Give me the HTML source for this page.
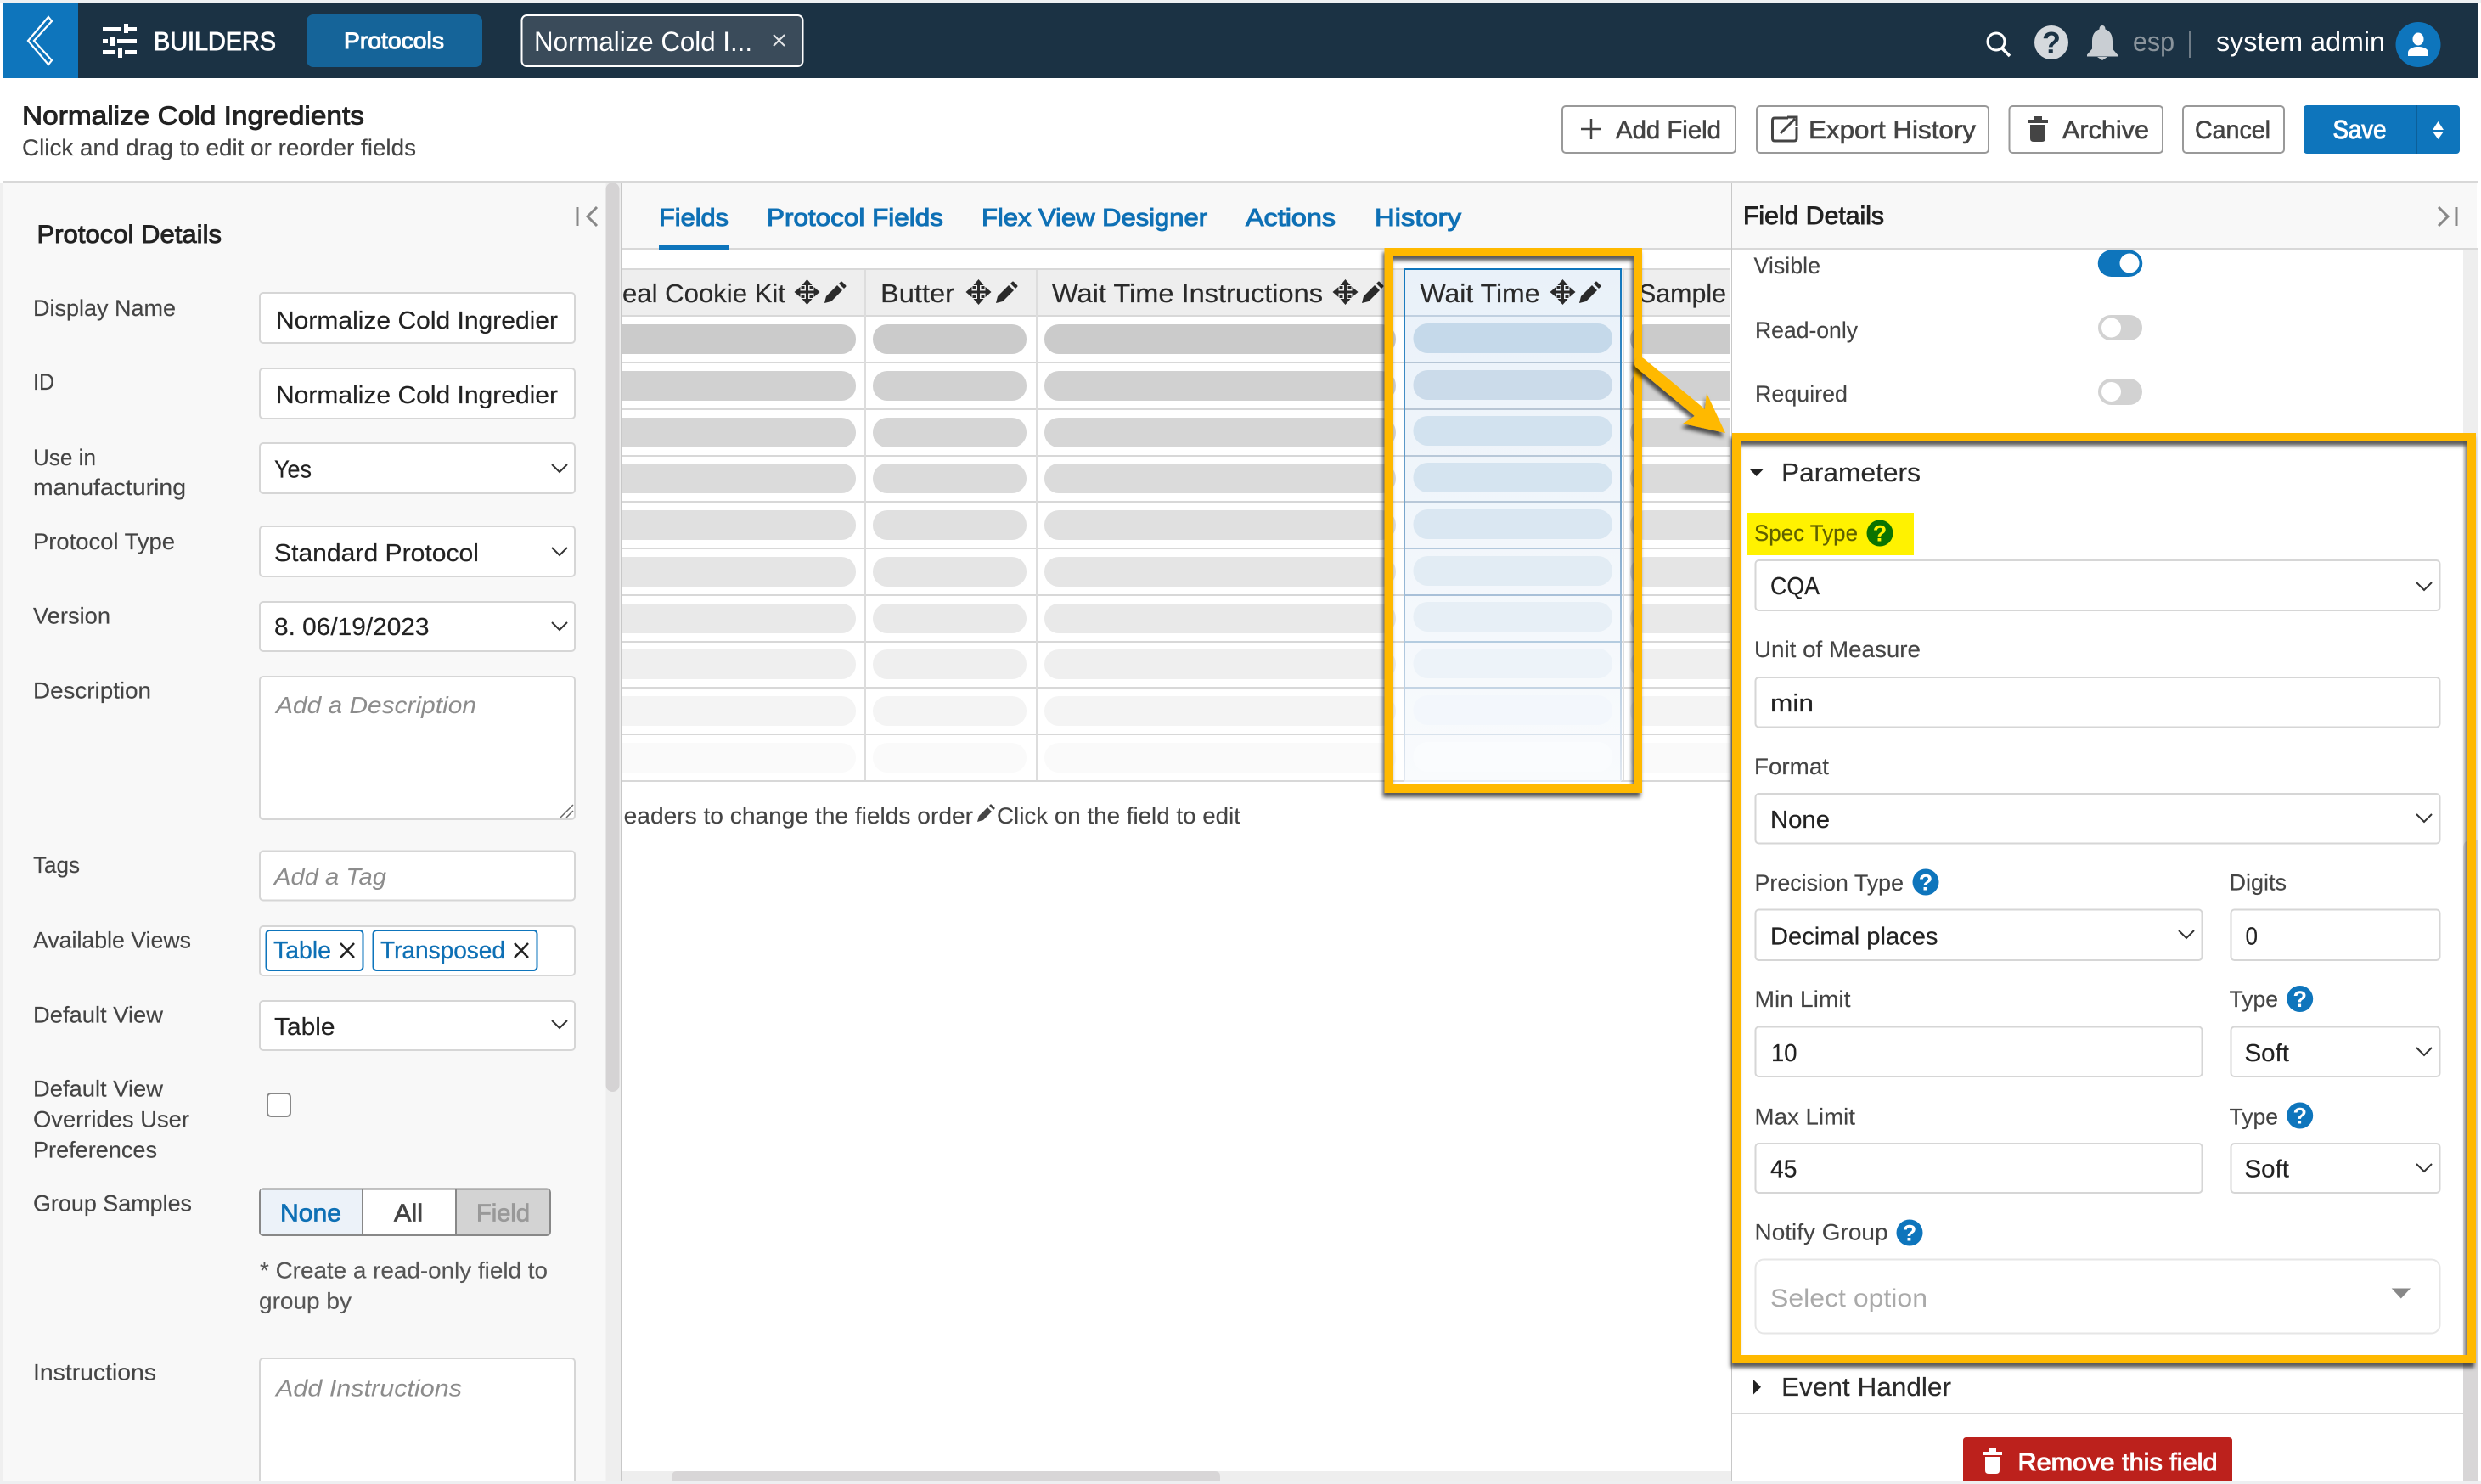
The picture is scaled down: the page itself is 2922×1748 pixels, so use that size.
<!DOCTYPE html>
<html lang="en"><head><meta charset="utf-8"><title>Normalize Cold Ingredients</title>
<style>
html,body{margin:0;padding:0;background:#fff;width:2922px;height:1748px;overflow:hidden}
svg{display:block}
text{font-family:"Liberation Sans",Arial,sans-serif;white-space:pre;transform:translateX(-1px)}
.l{font-size:27px;fill:#444;stroke:#444;stroke-width:.15}
.v{font-size:29px;fill:#222;stroke:#222;stroke-width:.2}
.ph{font-size:28px;fill:#8c8c8c;font-style:italic}
.h{font-size:30px;fill:#222;stroke:#222;stroke-width:.9}
.tb{font-size:29px;fill:#0e70b5;stroke:#0e70b5;stroke-width:1}
.th{font-size:31px;fill:#2a2a2a;stroke:#2a2a2a;stroke-width:.2}
.b{font-size:30px;fill:#444;stroke:#444;stroke-width:.6}
.w{fill:#fff;stroke:#fff;stroke-width:1}
.q{font-size:27px;font-weight:700;fill:#fff;text-anchor:middle}
.i{fill:#fff;stroke:#d6d6d6;stroke-width:2}
.bt{fill:#fff;stroke:#999;stroke-width:2}
.c{fill:none;stroke:#333;stroke-width:2}
.rl{fill:#d8d8d8}
</style></head><body>
<svg xmlns="http://www.w3.org/2000/svg" width="2922" height="1748" viewBox="0 0 2922 1748">
<defs>
<filter id="sh" x="-15%" y="-15%" width="130%" height="130%"><feDropShadow dx="-2" dy="5" stdDeviation="2.5" flood-color="#000" flood-opacity=".65"/></filter>
<clipPath id="cc"><rect x="732" y="294" width="1306" height="700"/></clipPath>
<linearGradient id="hb" x1="0" y1="0" x2="0" y2="1"><stop offset="0" stop-color="#e9f1f9"/><stop offset="1" stop-color="#f9fbfd"/></linearGradient>
<linearGradient id="hl" x1="0" y1="0" x2="0" y2="1"><stop offset="0" stop-color="#0e75bc"/><stop offset=".5" stop-color="#7fa8cc"/><stop offset="1" stop-color="#e2e8f0"/></linearGradient>
<path id="ch" class="c" d="M0,0 L9,9 L18,0"/>
<path id="mv" fill="#2a2a2a" d="M0,-15 L6,-8 H1.500 V-1.500 H8 V-6 L15,0 L8,6 V1.500 H1.500 V8 H6 L0,15 L-6,8 H-1.500 V1.500 H-8 V6 L-15,0 L-8,-6 V-1.500 H-1.500 V-8 H-6 Z M-7,-7 h4 v4 h-4 Z M3,-7 h4 v4 h-4 Z M-7,3 h4 v4 h-4 Z M3,3 h4 v4 h-4 Z"/>
<path id="pn" fill="#2a2a2a" d="M0,25 L2,17 L15,4 L21,10 L8,23 Z M17,2 L19,0 Q20,-1 21,0 L25,4 Q26,5 25,6 L23,8 Z"/>
<g id="p"><rect x="700" width="308" height="35" rx="17"/><rect x="1028" width="181" height="35" rx="17"/><rect x="1230" width="414" height="35" rx="17"/><rect x="1920" width="160" height="35" rx="17"/></g>
</defs>

<!-- page chrome -->
<rect width="2922" height="4" fill="#edf0f2"/>
<rect y="215" width="4" height="1533" fill="#efefef"/>

<!-- top bar -->
<rect x="4" y="4" width="2914" height="88" fill="#1b3244"/>
<rect x="4" y="4" width="88" height="88" fill="#0e75bc"/>
<path d="M57,20 L33,48 L57,76 L61,71 L40,48 L61,25 Z" fill="none" stroke="#fff" stroke-width="2.2" stroke-linejoin="miter"/>
<g fill="#fff">
<rect x="121" y="32" width="21" height="5"/><rect x="146" y="28" width="5" height="11"/><rect x="151" y="32" width="10" height="5"/>
<rect x="121" y="46" width="6" height="5"/><rect x="130" y="43" width="5" height="11"/><rect x="138" y="46" width="23" height="5"/>
<rect x="121" y="59" width="14" height="5"/><rect x="139" y="57" width="5" height="11"/><rect x="147" y="59" width="14" height="5"/>
</g>
<text x="182" y="59" font-size="31" class="w" textLength="144" lengthAdjust="spacingAndGlyphs">BUILDERS</text>
<rect x="361" y="17" width="207" height="62" rx="8" fill="#156499"/>
<text x="406" y="57" font-size="27" class="w" textLength="118" lengthAdjust="spacingAndGlyphs">Protocols</text>
<rect x="614.5" y="18" width="331" height="60" rx="6" fill="#3a4b5a" stroke="#fff" stroke-width="2"/>
<text x="630" y="60" font-size="32" fill="#fff" textLength="257" lengthAdjust="spacingAndGlyphs">Normalize Cold I...</text>
<path d="M911,41 L924,54 M924,41 L911,54" stroke="#e4e6e8" stroke-width="2"/>

<circle cx="2351" cy="49" r="10" fill="none" stroke="#fff" stroke-width="3"/><path d="M2358,57 L2367,66" stroke="#fff" stroke-width="3.500"/>
<circle cx="2416" cy="50" r="20" fill="#d5d9dd"/>
<text x="2417" y="63" font-size="36" font-weight="700" fill="#1b3244" text-anchor="middle">?</text>
<path d="M2476,30 c2.500,0 3.500,2 3.500,4.500 c6,2 8.500,7 8.500,14 v9 l6,7 v2 h-36 v-2 l6,-7 v-9 c0,-7 2.500,-12 8.500,-14 c0,-2.500 1,-4.500 3.500,-4.500 Z M2470,67 h12 l-6,4 Z" fill="#c9ced3"/>
<text x="2513" y="60" font-size="32" fill="#8a949c" textLength="49" lengthAdjust="spacingAndGlyphs">esp</text>
<rect x="2578" y="36" width="2" height="32" fill="#6f7c87"/>
<text x="2611" y="60" font-size="32" fill="#fff" textLength="199" lengthAdjust="spacingAndGlyphs">system admin</text>
<circle cx="2848" cy="52.500" r="26.500" fill="#0e75bc"/>
<ellipse cx="2848" cy="46" rx="6.500" ry="7.500" fill="#fff"/>
<path d="M2836,66 v-4 c0,-4 5,-7 12,-7 c7,0 12,3 12,7 v4 Z" fill="#fff"/>

<!-- title row -->
<text x="27" y="146.500" font-size="31" fill="#222" stroke="#222" stroke-width=".9" textLength="403" lengthAdjust="spacingAndGlyphs">Normalize Cold Ingredients</text>
<text x="27" y="183" font-size="27" fill="#444" stroke="#444" stroke-width=".15" textLength="464" lengthAdjust="spacingAndGlyphs">Click and drag to edit or reorder fields</text>

<rect class="bt" x="1840" y="125" width="204" height="55" rx="4"/>
<path d="M1862,152 H1886 M1874,140 V164" stroke="#444" stroke-width="2.500"/>
<text x="1904" y="163" class="b" textLength="124" lengthAdjust="spacingAndGlyphs">Add Field</text>
<rect class="bt" x="2069" y="125" width="273" height="55" rx="4"/>
<path d="M2106,139 H2090 Q2087.500,139 2087.500,142 V163 Q2087.500,166 2090,166 H2113 Q2116,166 2116,163 V150" fill="none" stroke="#444" stroke-width="3"/>
<path d="M2097,157 L2114,140 M2105,138 H2116 V149" fill="none" stroke="#444" stroke-width="3"/>
<text x="2131" y="163" class="b" textLength="197" lengthAdjust="spacingAndGlyphs">Export History</text>
<rect class="bt" x="2366.500" y="125" width="180.500" height="55" rx="4"/>
<path d="M2388,141 H2395 V137 H2405 V141 H2412 V145 H2388 Z M2391,147 H2409 V163 Q2409,167 2405,167 H2395 Q2391,167 2391,163 Z" fill="#444"/>
<text x="2430" y="163" class="b" textLength="102" lengthAdjust="spacingAndGlyphs">Archive</text>
<rect class="bt" x="2571" y="125" width="119" height="55" rx="4"/>
<text x="2586" y="163" class="b" textLength="89" lengthAdjust="spacingAndGlyphs">Cancel</text>
<rect x="2713" y="124" width="184" height="57" rx="4" fill="#0e75bc"/>
<rect x="2845" y="124" width="2" height="57" fill="#0c5f99"/>
<text x="2748.500" y="163" font-size="31" class="w" textLength="63" lengthAdjust="spacingAndGlyphs">Save</text>
<path d="M2871.500,143 L2878,153 H2865 Z M2871.500,164 L2865,155 H2878 Z" fill="#fff"/>

<rect x="4" y="213" width="2914" height="2" fill="#d8d8d8"/>

<!-- left panel -->
<rect x="4" y="215" width="709.500" height="1529" fill="#f8f8f8"/>
<rect x="713.500" y="215" width="18" height="1529" fill="#eee"/>
<rect x="713.500" y="215" width="16" height="1071" rx="8" fill="#d5d3d4"/>
<rect x="731" y="215" width="1" height="1529" fill="#c8c8c8"/>
<path d="M680,244 V266" stroke="#888" stroke-width="3"/><path d="M703,244 L692,255 L703,266" fill="none" stroke="#888" stroke-width="3"/>
<text x="44.500" y="286" class="h" textLength="217.500" lengthAdjust="spacingAndGlyphs">Protocol Details</text>

<text x="40" y="372" class="l" textLength="168" lengthAdjust="spacingAndGlyphs">Display Name</text>
<rect class="i" x="306" y="345" width="371" height="59" rx="4"/>
<text x="326" y="387" class="v" textLength="332" lengthAdjust="spacingAndGlyphs">Normalize Cold Ingredier</text>

<text x="40" y="459" class="l" textLength="25" lengthAdjust="spacingAndGlyphs">ID</text>
<rect class="i" x="306" y="434" width="371" height="59" rx="4"/>
<text x="326" y="475" class="v" textLength="332" lengthAdjust="spacingAndGlyphs">Normalize Cold Ingredier</text>

<text x="40" y="548" class="l" textLength="74" lengthAdjust="spacingAndGlyphs">Use in</text>
<text x="40" y="583" class="l" textLength="180" lengthAdjust="spacingAndGlyphs">manufacturing</text>
<rect class="i" x="306" y="522" width="371" height="59" rx="4"/>
<text x="324" y="562.500" class="v" textLength="44" lengthAdjust="spacingAndGlyphs">Yes</text>
<use href="#ch" x="650" y="547"/>

<text x="40" y="647" class="l" textLength="167" lengthAdjust="spacingAndGlyphs">Protocol Type</text>
<rect class="i" x="306" y="620" width="371" height="59" rx="4"/>
<text x="324" y="661" class="v" textLength="241" lengthAdjust="spacingAndGlyphs">Standard Protocol</text>
<use href="#ch" x="650" y="645"/>

<text x="40" y="734.500" class="l" textLength="91" lengthAdjust="spacingAndGlyphs">Version</text>
<rect class="i" x="306" y="709" width="371" height="58" rx="4"/>
<text x="324" y="748" class="v" textLength="182.500" lengthAdjust="spacingAndGlyphs">8. 06/19/2023</text>
<use href="#ch" x="650" y="733"/>

<text x="40" y="822.500" class="l" textLength="139" lengthAdjust="spacingAndGlyphs">Description</text>
<rect class="i" x="306" y="797" width="371" height="168" rx="4"/>
<text x="326" y="840" class="ph" textLength="236" lengthAdjust="spacingAndGlyphs">Add a Description</text>
<path d="M660,963 L675,948 M667,963 L675,955" stroke="#666" stroke-width="1.500"/>

<text x="40" y="1028" class="l" textLength="55" lengthAdjust="spacingAndGlyphs">Tags</text>
<rect class="i" x="306" y="1002.500" width="371" height="58" rx="4"/>
<text x="324" y="1042" class="ph" textLength="132" lengthAdjust="spacingAndGlyphs">Add a Tag</text>

<text x="40" y="1116.500" class="l" textLength="186" lengthAdjust="spacingAndGlyphs">Available Views</text>
<rect class="i" x="306" y="1091" width="371" height="58" rx="4"/>
<rect x="313.500" y="1096" width="114" height="47" rx="4" fill="#fff" stroke="#0e75bc" stroke-width="2"/>
<text x="323" y="1129" font-size="29" fill="#0e70b5" stroke="#0e70b5" stroke-width=".3" textLength="68" lengthAdjust="spacingAndGlyphs">Table</text>
<path d="M401,1111 L417,1128 M417,1111 L401,1128" stroke="#222" stroke-width="2.500"/>
<rect x="439.500" y="1096" width="193" height="47" rx="4" fill="#fff" stroke="#0e75bc" stroke-width="2"/>
<text x="449" y="1129" font-size="29" fill="#0e70b5" stroke="#0e70b5" stroke-width=".3" textLength="147" lengthAdjust="spacingAndGlyphs">Transposed</text>
<path d="M606,1111 L622,1128 M622,1111 L606,1128" stroke="#222" stroke-width="2.500"/>

<text x="40" y="1204.500" class="l" textLength="153" lengthAdjust="spacingAndGlyphs">Default View</text>
<rect class="i" x="306" y="1179" width="371" height="58" rx="4"/>
<text x="324" y="1219" class="v" textLength="71.500" lengthAdjust="spacingAndGlyphs">Table</text>
<use href="#ch" x="650" y="1202"/>

<text x="40" y="1291.500" class="l" textLength="153" lengthAdjust="spacingAndGlyphs">Default View</text>
<text x="40" y="1327.500" class="l" textLength="184" lengthAdjust="spacingAndGlyphs">Overrides User</text>
<text x="40" y="1363.500" class="l" textLength="146" lengthAdjust="spacingAndGlyphs">Preferences</text>
<rect x="315" y="1288" width="27" height="27" rx="4" fill="#fff" stroke="#888" stroke-width="2"/>

<text x="40" y="1426.500" class="l" textLength="187" lengthAdjust="spacingAndGlyphs">Group Samples</text>
<rect x="306" y="1400.500" width="342" height="54.500" rx="4" fill="#fff" stroke="#888" stroke-width="2"/>
<path d="M307,1401.500 H427 V1454 H307 Z" fill="#ecf2f9"/>
<path d="M537,1401.500 H647 V1454 H537 Z" fill="#d3d3d3"/>
<path d="M427,1401 V1455 M537,1401 V1455" stroke="#888" stroke-width="2"/>
<text x="331" y="1438.500" font-size="29" fill="#0e70b5" stroke="#0e70b5" stroke-width=".8" textLength="72" lengthAdjust="spacingAndGlyphs">None</text>
<text x="465" y="1438.500" font-size="29" fill="#444" stroke="#444" stroke-width=".8" textLength="34" lengthAdjust="spacingAndGlyphs">All</text>
<text x="562" y="1438.500" font-size="29" fill="#999" stroke="#999" stroke-width=".8" textLength="63" lengthAdjust="spacingAndGlyphs">Field</text>
<text x="307" y="1505.500" font-size="27" fill="#555" stroke="#555" stroke-width=".15" textLength="339" lengthAdjust="spacingAndGlyphs">* Create a read-only field to</text>
<text x="306" y="1541.500" font-size="27" fill="#555" stroke="#555" stroke-width=".15" textLength="109" lengthAdjust="spacingAndGlyphs">group by</text>

<text x="40" y="1625.500" class="l" textLength="145" lengthAdjust="spacingAndGlyphs">Instructions</text>
<rect class="i" x="306" y="1600" width="371" height="170" rx="4"/>
<rect x="0" y="1744" width="732" height="4" fill="#eeeff1"/>
<text x="326" y="1644.500" class="ph" textLength="219" lengthAdjust="spacingAndGlyphs">Add Instructions</text>

<!-- center -->
<rect x="732" y="215" width="1307" height="77" fill="#f8f8f8"/>
<rect x="732" y="292" width="1307" height="2" fill="#d8d8d8"/>
<rect x="776" y="288" width="82" height="6" fill="#0e75bc"/>
<text x="777" y="266" class="tb" textLength="82" lengthAdjust="spacingAndGlyphs">Fields</text>
<text x="904" y="266" class="tb" textLength="208" lengthAdjust="spacingAndGlyphs">Protocol Fields</text>
<text x="1157" y="266" class="tb" textLength="266" lengthAdjust="spacingAndGlyphs">Flex View Designer</text>
<text x="1468" y="266" class="tb" textLength="106" lengthAdjust="spacingAndGlyphs">Actions</text>
<text x="1620" y="266" class="tb" textLength="102" lengthAdjust="spacingAndGlyphs">History</text>

<g clip-path="url(#cc)">
<rect x="732" y="316" width="1306" height="56" fill="#eee"/>
<rect class="rl" x="732" y="316" width="1306" height="2"/>
<rect class="rl" x="732" y="371" width="1306" height="2"/>
<rect class="rl" x="732" y="426" width="1306" height="2"/>
<rect class="rl" x="732" y="481" width="1306" height="2"/>
<rect class="rl" x="732" y="536" width="1306" height="2"/>
<rect class="rl" x="732" y="590" width="1306" height="2"/>
<rect class="rl" x="732" y="645" width="1306" height="2"/>
<rect class="rl" x="732" y="700" width="1306" height="2"/>
<rect class="rl" x="732" y="755" width="1306" height="2"/>
<rect class="rl" x="732" y="809" width="1306" height="2"/>
<rect class="rl" x="732" y="864" width="1306" height="2"/>
<rect class="rl" x="732" y="919" width="1306" height="2"/>
<rect x="1018" y="318" width="2" height="601" fill="#ddd"/>
<rect x="1220" y="318" width="2" height="601" fill="#ddd"/>
<rect x="1911" y="318" width="2" height="601" fill="#ddd"/>

<use href="#p" y="382" fill="#cbcbcb"/>
<use href="#p" y="437" fill="#d1d1d1"/>
<use href="#p" y="492" fill="#d6d6d6"/>
<use href="#p" y="546" fill="#dbdbdb"/>
<use href="#p" y="601" fill="#e0e0e0"/>
<use href="#p" y="656" fill="#e5e5e5"/>
<use href="#p" y="711" fill="#e9e9e9"/>
<use href="#p" y="765" fill="#efefef"/>
<use href="#p" y="820" fill="#f4f4f4"/>
<use href="#p" y="875" fill="#fafafa"/>

<text x="734" y="356" class="th" textLength="192" lengthAdjust="spacingAndGlyphs">eal Cookie Kit</text>
<use href="#mv" x="950.500" y="344"/><use href="#pn" x="971" y="332"/>
<text x="1038" y="356" class="th" textLength="87" lengthAdjust="spacingAndGlyphs">Butter</text>
<use href="#mv" x="1152.500" y="344"/><use href="#pn" x="1173" y="332"/>
<text x="1240" y="356" class="th" textLength="319" lengthAdjust="spacingAndGlyphs">Wait Time Instructions</text>
<use href="#mv" x="1584.500" y="344"/><use href="#pn" x="1604" y="332"/>
<text x="1931" y="356" class="th" textLength="103" lengthAdjust="spacingAndGlyphs">Sample</text>

<!-- highlighted column -->
<rect x="1654" y="317" width="255" height="603" fill="url(#hb)"/>
<rect x="1654" y="371" width="255" height="2" fill="#c0d0e0"/>
<rect x="1654" y="426" width="255" height="2" fill="#b5c5d5"/>
<rect x="1654" y="481" width="255" height="2" fill="#b8c6d4"/>
<rect x="1654" y="536" width="255" height="2" fill="#b8c8d8"/>
<rect x="1654" y="590" width="255" height="2" fill="#b8c8d8"/>
<rect x="1654" y="645" width="255" height="2" fill="#b3c8dc"/>
<rect x="1654" y="700" width="255" height="2" fill="#a8c0d8"/>
<rect x="1654" y="755" width="255" height="2" fill="#b4cce0"/>
<rect x="1654" y="809" width="255" height="2" fill="#c4d4e4"/>
<rect x="1654" y="864" width="255" height="2" fill="#d8e2ec"/>
<rect x="1654" y="919" width="255" height="2" fill="#e8eef4"/>
<rect x="1653" y="317" width="2" height="603" fill="url(#hl)"/>
<rect x="1908" y="317" width="2" height="603" fill="url(#hl)"/>
<rect x="1653" y="316" width="257" height="2" fill="#0e75bc"/>
<rect x="1664.500" y="381" width="234.500" height="35" rx="17" fill="#c5d9ea"/>
<rect x="1664.500" y="436" width="234.500" height="35" rx="17" fill="#cbdbea"/>
<rect x="1664.500" y="490" width="234.500" height="35" rx="17" fill="#d2e2ef"/>
<rect x="1664.500" y="545" width="234.500" height="35" rx="17" fill="#d5e4f0"/>
<rect x="1664.500" y="600" width="234.500" height="35" rx="17" fill="#dae7f2"/>
<rect x="1664.500" y="655" width="234.500" height="35" rx="17" fill="#e2ecf4"/>
<rect x="1664.500" y="709" width="234.500" height="35" rx="17" fill="#e7eff6"/>
<rect x="1664.500" y="764" width="234.500" height="35" rx="17" fill="#edf3f9"/>
<rect x="1664.500" y="819" width="234.500" height="35" rx="17" fill="#f3f7fc"/>
<rect x="1664.500" y="874" width="234.500" height="35" rx="17" fill="#fafcfe"/>
<text x="1673.500" y="356" class="th" textLength="141" lengthAdjust="spacingAndGlyphs">Wait Time</text>
<use href="#mv" x="1840.500" y="344"/><use href="#pn" x="1860" y="332"/>
</g>

<svg x="732" y="940" width="760" height="50" viewBox="732 940 760 50" overflow="hidden">
<text x="720" y="970" font-size="27" fill="#444" stroke="#444" stroke-width=".15" textLength="427" lengthAdjust="spacingAndGlyphs">headers to change the fields order</text>
</svg>
<path d="M1151,968 L1153,961 L1163,951 L1168,956 L1158,966 Z M1165,949 L1167,947 L1172,952 L1170,954 Z" fill="#444"/>
<text x="1175" y="970" font-size="27" fill="#444" stroke="#444" stroke-width=".15" textLength="287" lengthAdjust="spacingAndGlyphs">Click on the field to edit</text>

<rect x="732" y="1733" width="1307" height="11" fill="#eee"/>
<path d="M791.500,1744 V1739 Q791.500,1733 797,1733 H1431 Q1437,1733 1437,1739 V1744 Z" fill="#d8d6d7"/>
<rect x="2039" y="215" width="1" height="1529" fill="#c8c8c8"/>

<!-- right panel -->
<rect x="2040" y="215" width="877" height="77" fill="#f8f8f8"/>
<rect x="2040" y="292" width="878" height="2" fill="#d8d8d8"/>
<text x="2054" y="264" class="h" textLength="166" lengthAdjust="spacingAndGlyphs">Field Details</text>
<path d="M2872,244 L2883,255 L2872,266" fill="none" stroke="#888" stroke-width="3"/><path d="M2893,244 V266" stroke="#888" stroke-width="3"/>
<rect x="2901" y="294" width="17" height="1450" fill="#eee"/>
<path d="M2901,1744 V999 Q2901,990 2910,990 H2918 V1744 Z" fill="#d8d6d7"/>

<text x="2066.500" y="322" class="l" textLength="78.500" lengthAdjust="spacingAndGlyphs">Visible</text>
<path d="M2486.500,294.500 H2507.500 A15.500,15.500 0 0 1 2507.500,326 H2486.500 A15.500,15.500 0 0 1 2486.500,294.500 Z" fill="#0e75bc"/>
<circle cx="2508" cy="310" r="11.500" fill="#fff"/>
<text x="2068" y="398" class="l" textLength="121" lengthAdjust="spacingAndGlyphs">Read-only</text>
<rect x="2471" y="371" width="52" height="30" rx="15" fill="#d2d2d2"/>
<circle cx="2486.500" cy="386" r="11.500" fill="#fff"/>
<text x="2068" y="473" class="l" textLength="109" lengthAdjust="spacingAndGlyphs">Required</text>
<rect x="2471" y="446" width="52" height="31" rx="15.500" fill="#d2d2d2"/>
<circle cx="2486.500" cy="461.500" r="11.500" fill="#fff"/>

<path d="M2061,553 H2076.500 L2068.700,561 Z" fill="#222"/>
<text x="2099" y="567" font-size="31" fill="#2a2a2a" stroke="#2a2a2a" stroke-width=".2" textLength="164" lengthAdjust="spacingAndGlyphs">Parameters</text>

<rect x="2058" y="604" width="196" height="50" fill="#fff200"/>
<text x="2067" y="637" font-size="27" fill="#5f6000" stroke="#5f6000" stroke-width=".15" textLength="122" lengthAdjust="spacingAndGlyphs">Spec Type</text>
<circle cx="2214" cy="628" r="15.500" fill="#0b7300"/>
<text x="2215" y="637.500" class="q" style="fill:#fff200">?</text>
<rect class="i" x="2067.500" y="660" width="806" height="59" rx="4"/>
<text x="2086" y="700" class="v" textLength="58" lengthAdjust="spacingAndGlyphs">CQA</text>
<use href="#ch" x="2846" y="686"/>

<text x="2067" y="774" class="l" textLength="196" lengthAdjust="spacingAndGlyphs">Unit of Measure</text>
<rect class="i" x="2067.500" y="798" width="806" height="58.500" rx="4"/>
<text x="2086" y="838" class="v" textLength="51" lengthAdjust="spacingAndGlyphs">min</text>

<text x="2067" y="912" class="l" textLength="88" lengthAdjust="spacingAndGlyphs">Format</text>
<rect class="i" x="2067.500" y="935" width="806" height="58.500" rx="4"/>
<text x="2086" y="975" class="v" textLength="70" lengthAdjust="spacingAndGlyphs">None</text>
<use href="#ch" x="2846" y="959"/>

<text x="2067.500" y="1049" class="l" textLength="175.500" lengthAdjust="spacingAndGlyphs">Precision Type</text>
<circle cx="2268" cy="1039" r="15.500" fill="#0e75bc"/><text x="2269" y="1048.500" class="q">?</text>
<text x="2626.500" y="1048.500" class="l" textLength="67.500" lengthAdjust="spacingAndGlyphs">Digits</text>
<rect class="i" x="2067.500" y="1071.500" width="526" height="59.500" rx="4"/>
<text x="2086" y="1112.500" class="v" textLength="197.500" lengthAdjust="spacingAndGlyphs">Decimal places</text>
<use href="#ch" x="2566" y="1096"/>
<rect class="i" x="2627.500" y="1071.500" width="246" height="59.500" rx="4"/>
<text x="2645.500" y="1112.500" class="v" textLength="14.500" lengthAdjust="spacingAndGlyphs">0</text>

<text x="2067.500" y="1186" class="l" textLength="113" lengthAdjust="spacingAndGlyphs">Min Limit</text>
<text x="2626.500" y="1186" class="l" textLength="57.500" lengthAdjust="spacingAndGlyphs">Type</text>
<circle cx="2708.700" cy="1176.500" r="15.500" fill="#0e75bc"/><text x="2709.700" y="1186" class="q">?</text>
<rect class="i" x="2067.500" y="1209.500" width="526" height="58.500" rx="4"/>
<text x="2087" y="1250" class="v" textLength="30.500" lengthAdjust="spacingAndGlyphs">10</text>
<rect class="i" x="2627.500" y="1209.500" width="246" height="58.500" rx="4"/>
<text x="2644.500" y="1250" class="v" textLength="52.500" lengthAdjust="spacingAndGlyphs">Soft</text>
<use href="#ch" x="2846" y="1234"/>

<text x="2067.500" y="1324.500" class="l" textLength="118.500" lengthAdjust="spacingAndGlyphs">Max Limit</text>
<text x="2626.500" y="1324.500" class="l" textLength="57.500" lengthAdjust="spacingAndGlyphs">Type</text>
<circle cx="2708.700" cy="1314" r="15.500" fill="#0e75bc"/><text x="2709.700" y="1323.500" class="q">?</text>
<rect class="i" x="2067.500" y="1347" width="526" height="58" rx="4"/>
<text x="2086" y="1386.500" class="v" textLength="31.500" lengthAdjust="spacingAndGlyphs">45</text>
<rect class="i" x="2627.500" y="1347" width="246" height="58" rx="4"/>
<text x="2644.500" y="1386.500" class="v" textLength="52.500" lengthAdjust="spacingAndGlyphs">Soft</text>
<use href="#ch" x="2846" y="1371"/>

<text x="2067.500" y="1460.500" class="l" textLength="157" lengthAdjust="spacingAndGlyphs">Notify Group</text>
<circle cx="2249" cy="1452" r="15.500" fill="#0e75bc"/><text x="2250" y="1461.500" class="q">?</text>
<rect x="2067.500" y="1483.500" width="806" height="87" rx="10" fill="#fff" stroke="#e6e6e6" stroke-width="2"/>
<text x="2086" y="1539" font-size="30" fill="#aaa" textLength="185" lengthAdjust="spacingAndGlyphs">Select option</text>
<path d="M2816.700,1517.500 H2839 L2827.800,1529.500 Z" fill="#888"/>

<path d="M2065,1625 L2074,1633.800 L2065,1642.500 Z" fill="#222"/>
<text x="2099" y="1644" font-size="31" fill="#2a2a2a" stroke="#2a2a2a" stroke-width=".2" textLength="200" lengthAdjust="spacingAndGlyphs">Event Handler</text>
<rect x="2040" y="1664" width="861" height="2" fill="#d8d8d8"/>
<path d="M2312,1744 V1697 Q2312,1693 2316,1693 H2625 Q2629,1693 2629,1697 V1744 Z" fill="#bc211c"/>
<path d="M2335,1710 H2342 V1706 H2351 V1710 H2358 V1714 H2335 Z M2338,1716 H2355 V1732 Q2355,1736 2351,1736 H2342 Q2338,1736 2338,1732 Z" fill="#fff"/>
<text x="2377.500" y="1732" font-size="29" class="w" textLength="235" lengthAdjust="spacingAndGlyphs">Remove this field</text>

<!-- bottom strip -->
<rect y="1744" width="2922" height="4" fill="#eeeff1"/>

<!-- callouts -->
<path filter="url(#sh)" fill="#ffb900" fill-rule="evenodd" d="M1630.500,292 H1934 V934 H1630.500 Z M1641,302 V924 H1924 V302 Z"/>
<path filter="url(#sh)" fill="#ffb900" fill-rule="evenodd" d="M2040,510 H2916 V1606 H2040 Z M2050,520 V1596 H2906 V520 Z"/>
<g filter="url(#sh)">
<path d="M1932,428 L2002,486" stroke="#ffb900" stroke-width="14" stroke-linecap="round" fill="none"/>
<path d="M2032,510 L2010,463 L2008,482 L1982,499 Z" fill="#ffb900"/>
</g>
</svg>
</body></html>
